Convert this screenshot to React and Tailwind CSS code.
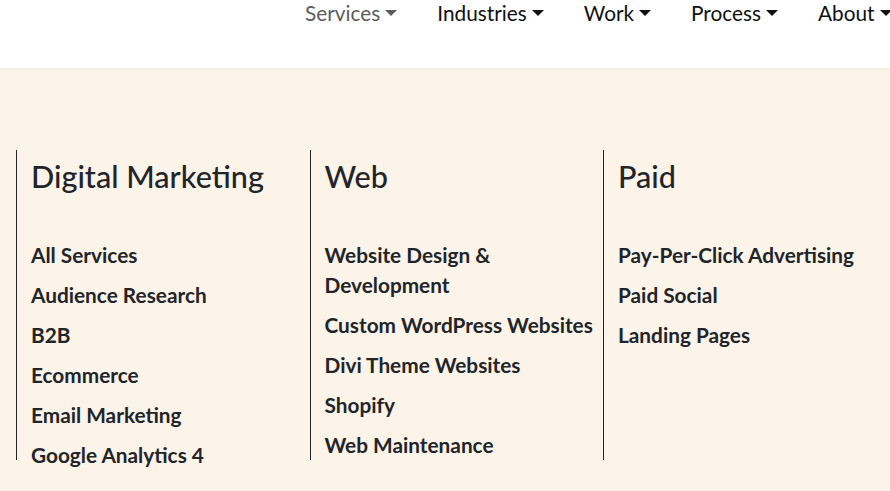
import React from 'react';

const columns = [
  {
    title: 'Digital Marketing',
    items: ['All Services', 'Audience Research', 'B2B', 'Ecommerce', 'Email Marketing', 'Google Analytics 4'],
  },
  {
    title: 'Web',
    items: ['Website Design & Development', 'Custom WordPress Websites', 'Divi Theme Websites', 'Shopify', 'Web Maintenance'],
  },
  {
    title: 'Paid',
    items: ['Pay-Per-Click Advertising', 'Paid Social', 'Landing Pages'],
  },
];

const navItems = ['Services', 'Industries', 'Work', 'Process', 'About'];

function Caret() {
  return (
    <span className="ml-[5px] inline-block h-0 w-0 border-x-[6px] border-t-[6px] border-x-transparent border-t-current align-[4px]" />
  );
}

export default function App() {
  return (
    <div className="h-[491px] w-[890px] overflow-hidden bg-[#fcf3e9] text-[#212529]" style={{ fontFamily: 'Lato, "Noto Sans", sans-serif' }}>
      <header className="relative z-10 flex h-[68px] bg-white shadow-[0_1px_3px_rgba(0,0,0,0.06)]">
        <nav className="ml-[285px] flex whitespace-nowrap">
          {navItems.map((item, i) => (
            <a
              key={item}
              className={`flex h-[26px] items-center px-5 text-[20.8px] leading-[26px] ${i === 0 ? 'text-[#5c5c5c]' : 'text-[#111]'}`}
            >
              {item}
              <Caret />
            </a>
          ))}
        </nav>
      </header>

      <section className="flex pl-4 pt-[82px]">
        {columns.map((col) => (
          <div key={col.title} className="h-[310px] w-[293.5px] shrink-0 border-l border-[#212529] pl-[14px] pt-[9px]">
            <h3 className="text-[30.6px] font-medium leading-[36px]">{col.title}</h3>
            <ul className="mt-[45px]">
              {col.items.map((item) => (
                <li key={item} className="mb-[10px] pr-2 text-[20.8px] font-bold leading-[30px]">
                  {item}
                </li>
              ))}
            </ul>
          </div>
        ))}
      </section>
    </div>
  );
}
